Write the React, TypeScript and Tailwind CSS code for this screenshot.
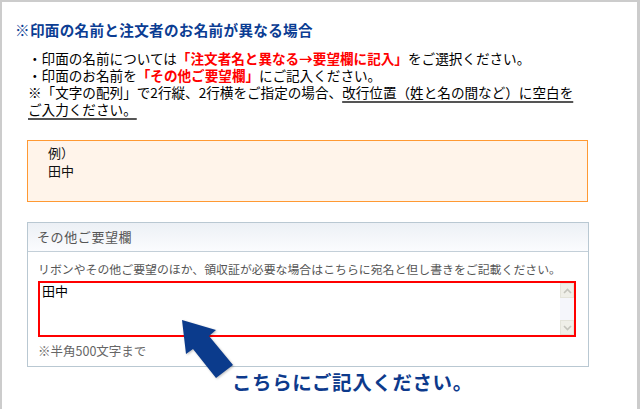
export default function App() {
  return (
    <div
      className="relative w-[640px] h-[409px] overflow-hidden bg-white border-t-2 border-l-2 border-r-[3px] border-[#cccccc] pt-[18px] text-black"
      style={{ fontFamily: '"Noto Sans CJK JP", "Noto Sans", sans-serif' }}
    >
      {/* heading */}
      <h2 className="ml-[13px] text-[14.6px] leading-[19px] font-bold tracking-[0.3px] text-[#0b3d93]">
        ※印面の名前と注文者のお名前が異なる場合
      </h2>

      {/* notes */}
      <div className="ml-[26px] mt-[11px] text-[13.6px] leading-[17px]">
        <p>
          ・印面の名前については
          <span className="font-bold text-[#ff0000]">「注文者名と異なる→要望欄に記入」</span>
          をご選択ください。
        </p>
        <p>
          ・印面のお名前を<span className="font-bold text-[#ff0000]">「その他ご要望欄」</span>にご記入ください。
        </p>
        <p>
          ※「文字の配列」で2行縦、2行横をご指定の場合、
          <span className="underline decoration-2 underline-offset-[3px] decoration-[#555]">
            改行位置（姓と名の間など）に空白を
          </span>
        </p>
        <p>
          <span className="underline decoration-2 underline-offset-[3px] decoration-[#555]">ご入力ください。</span>
        </p>
      </div>

      {/* example */}
      <div className="ml-[25px] mt-[22px] w-[561px] h-[62px] border border-[#ff9933] bg-[#fff4ea] pl-[20px] pt-[3px] text-[13px] leading-[18px] text-[#111]">
        <p>例）</p>
        <p>田中</p>
      </div>

      {/* request box */}
      <div className="ml-[25px] mt-[20px] w-[562px] border border-[#b9c8d2]">
        <div className="h-[29px] border-b border-[#c3cfd8] bg-gradient-to-b from-[#ecf0f5] to-[#fbfcfe] pl-[9px] text-[13px] leading-[28px] tracking-[0.6px] text-[#555]">
          その他ご要望欄
        </div>
        <div className="px-[10px] pt-[9px] pb-[7px]">
          <p className="text-[11.9px] leading-[16px] text-[#555]">
            リボンやその他ご要望のほか、領収証が必要な場合はこちらに宛名と但し書きをご記載ください。
          </p>
          <div className="mt-[4px] flex h-[56px] w-[538px] border-2 border-[#ff0000] bg-white">
            <div className="flex-1 pl-[2px] text-[13px] leading-[16px] text-black">田中</div>
            <div className="flex w-[14px] flex-col bg-[#f5f6fb]">
              <div className="flex h-[15px] items-center justify-center border border-[#e4e4da] bg-[#efefe8]">
                <svg width="9" height="6" viewBox="0 0 9 6">
                  <path d="M1 5 L4.5 1.5 L8 5" fill="none" stroke="#c4c4bc" strokeWidth="1.6" />
                </svg>
              </div>
              <div className="flex-1" />
              <div className="flex h-[15px] items-center justify-center border border-[#e4e4da] bg-[#efefe8]">
                <svg width="9" height="6" viewBox="0 0 9 6">
                  <path d="M1 1 L4.5 4.5 L8 1" fill="none" stroke="#c4c4bc" strokeWidth="1.6" />
                </svg>
              </div>
            </div>
          </div>
          <p className="mt-[6px] text-[12.5px] leading-[16px] text-[#666]">※半角500文字まで</p>
        </div>
      </div>

      {/* pointer arrow */}
      <svg
        className="absolute left-[173px] top-[310px] drop-shadow-[1px_1px_1px_rgba(0,0,0,0.25)]"
        width="64"
        height="72"
        viewBox="0 0 64 72"
      >
        <polygon
          points="5,6 39,16 32,22 56,51 39,64 16,35 9,40"
          transform="translate(2,2)"
          fill="#0b3b8c"
        />
      </svg>
      <div className="absolute left-[230px] top-[369px] text-[19.5px] leading-[22px] font-bold tracking-[0.6px] text-[#0d3a8c]">
        こちらにご記入ください。
      </div>
    </div>
  );
}
